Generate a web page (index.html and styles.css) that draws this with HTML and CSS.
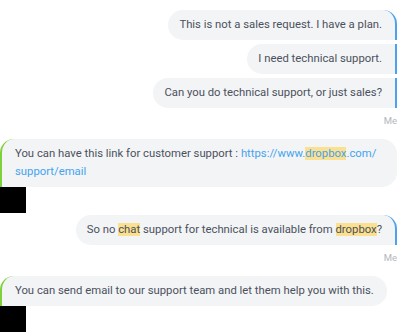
FILE: index.html
```html
<!DOCTYPE html>
<html lang="en">
<head>
    <meta charset="utf-8">
    <meta name="viewport" content="width=device-width, initial-scale=1">
    <title>Support Chat</title>
    <link rel="stylesheet" href="styles.css">
</head>
<body>
    <div class="chat">
        <div class="group group-me">
            <div class="bubble me first">This is not a sales request. I have a plan.</div>
            <div class="bubble me">I need technical support.</div>
            <div class="bubble me">Can you do technical support, or just sales?</div>
            <div class="sender">Me</div>
        </div>

        <div class="group group-agent">
            <div class="bubble agent">
                You can have this link for customer support :
                <a class="link" href="#">https://www.<mark>dropbox</mark>.com/<wbr>support/email</a>
            </div>
            <div class="avatar"></div>
        </div>

        <div class="group group-me">
            <div class="bubble me first">So no <mark>chat</mark> support for technical is available from <mark>dropbox</mark>?</div>
            <div class="sender">Me</div>
        </div>

        <div class="group group-agent">
            <div class="bubble agent">You can send email to our support team and let them help you with this.</div>
            <div class="avatar"></div>
        </div>
    </div>
</body>
</html>
```

FILE: styles.css
```css
* {
    margin: 0;
    padding: 0;
    box-sizing: border-box;
}

body {
    font-family: 'Roboto', 'Liberation Sans', sans-serif;
    background: #fff;
    color: #4a515c;
    overflow: hidden;
}

.chat {
    display: flex;
    flex-direction: column;
    padding: 10px 3px 0 0;
}

.group {
    display: flex;
    flex-direction: column;
}

.group-me {
    align-items: flex-end;
    gap: 4px;
}

.group-agent {
    align-items: flex-start;
}

.bubble {
    background: #f3f4f6;
    font-size: 11.3px;
    line-height: 18px;
    padding: 6px 13px 6px 11px;
    border-radius: 15px;
}

.bubble.me {
    border-right: 2px solid #4ba3ef;
    border-top-right-radius: 0;
    border-bottom-right-radius: 0;
}

.bubble.me.first {
    border-top-right-radius: 14px;
}

.bubble.agent {
    border-left: 2px solid #7ed13a;
    border-bottom-left-radius: 0;
    border-top-left-radius: 14px;
    padding: 6px 13px 6px 13px;
}

.sender {
    font-size: 9.5px;
    line-height: 12px;
    color: #b3b7bd;
    margin-top: 3px;
    margin-bottom: 12px;
}

.avatar {
    width: 26px;
    height: 26px;
    background: #000;
    margin-bottom: 2px;
}

.link {
    color: #44a3ef;
    text-decoration: none;
}

mark {
    background: #fbe08f;
    color: inherit;
}
```
